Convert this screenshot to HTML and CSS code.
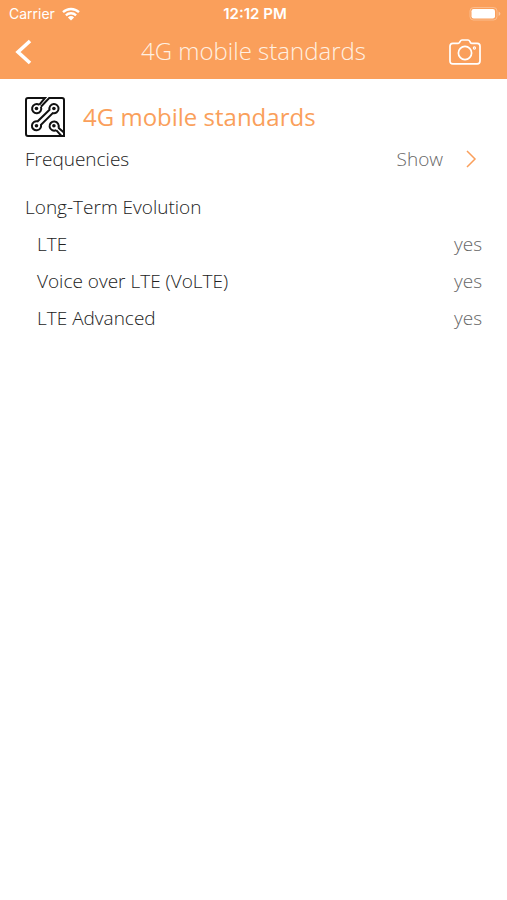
FILE: index.html
```html
<!DOCTYPE html>
<html lang="en">
<head>
<meta charset="utf-8">
<meta name="viewport" content="width=device-width, initial-scale=1">
<title>4G mobile standards</title>
<link rel="stylesheet" href="styles.css">
</head>
<body>
<header class="header">
  <div class="status">
    <div class="carrier">
      <span>Carrier</span>
      <svg class="wifi" viewBox="0 0 18 14" aria-hidden="true">
        <path d="M1 5.2a11.6 11.6 0 0 1 16 0M3.9 8.3a7.4 7.4 0 0 1 10.2 0" fill="none" stroke="currentColor" stroke-width="2.3"/>
        <path d="M9 13.6 5.9 10.5a4.5 4.5 0 0 1 6.2 0z" fill="currentColor"/>
      </svg>
    </div>
    <time class="time">12:12 PM</time>
    <svg class="battery" viewBox="0 0 32 16" aria-hidden="true">
      <rect x="1" y="1.5" width="27" height="12.5" rx="3.5" fill="none" stroke="currentColor" stroke-opacity=".3"/>
      <rect x="2.5" y="3" width="23.5" height="9.5" rx="2.2" fill="currentColor"/>
      <path d="M29.6 5.4v4.6q1.8-.8 1.8-2.3t-1.8-2.3z" fill="currentColor" fill-opacity=".4"/>
    </svg>
  </div>
  <nav class="nav">
    <button class="icon-button" type="button" aria-label="Back">
      <svg class="back" viewBox="0 0 18 28" aria-hidden="true">
        <path d="M15 3 3 14l12 11" fill="none" stroke="currentColor" stroke-width="3.6"/>
      </svg>
    </button>
    <div class="nav-title">4G mobile standards</div>
    <button class="icon-button camera-button" type="button" aria-label="Camera">
      <svg class="camera" viewBox="0 0 32 26" fill="none" stroke="currentColor" stroke-width="1.7" aria-hidden="true">
        <path d="M3.8 4.4h5.4q.8 0 1.2-.7l.9-1.5Q11.9 1 13 1h6q1.1 0 1.7 1.2l.9 1.5q.4.7 1.2.7h5.4Q31 4.4 31 7.2v14.9q0 2.8-2.8 2.8H3.8Q1 24.9 1 22.1V7.2q0-2.8 2.8-2.8z"/>
        <circle cx="16" cy="14" r="6.6"/>
        <circle cx="25.4" cy="9" r="1.1" stroke-width="1.1"/>
      </svg>
    </button>
  </nav>
</header>
<main class="content">
  <div class="title-row">
    <svg class="circuit" viewBox="0 0 40 40" fill="none" stroke="currentColor" stroke-width="2" aria-hidden="true">
      <path d="M14.2 7.8 20 1H3Q1 1 1 3v34q0 2 2 2h33.5L31.2 33.2"/>
      <path d="M15.9 9.8 24.2 1H37q2 0 2 2v32.5L33.4 30.8"/>
      <path d="M14.2 7.8A4.6 4.6 0 1 0 15.9 9.8M24.5 12.8 12.7 24.3A4.6 4.600 0 1 0 16 27.700L27.800 16.100A4.600 4.600 0 1 0 24.500 12.800zM33.400 30.800A4.600 4.600 0 1 0 31.200 33.200"/>
      <path d="M36.500 39H39V35.500"/>
      <g fill="currentColor" stroke="none">
        <circle cx="11.500" cy="11.500" r="1.800"/>
        <circle cx="28.900" cy="11.500" r="1.800"/>
        <circle cx="11.500" cy="28.800" r="1.800"/>
        <circle cx="28.900" cy="28.800" r="1.800"/>
      </g>
    </svg>
    <h1 class="title">4G mobile standards</h1>
  </div>
  <a class="row link-row" href="#frequencies">
    <span>Frequencies</span>
    <span class="value show">Show
      <svg class="chevron" viewBox="0 0 12 20" aria-hidden="true">
        <path d="m2 2 8 8-8 8" fill="none" stroke="currentColor" stroke-width="1.5"/>
      </svg>
    </span>
  </a>
  <h2 class="row section">Long-Term Evolution</h2>
  <dl class="list">
    <div class="row"><dt>LTE</dt><dd class="value">yes</dd></div>
    <div class="row"><dt>Voice over LTE (VoLTE)</dt><dd class="value">yes</dd></div>
    <div class="row"><dt>LTE Advanced</dt><dd class="value">yes</dd></div>
  </dl>
</main>
</body>
</html>
```
FILE: styles.css
```css
* {
  box-sizing: border-box;
}

body {
  margin: 0;
  background: #fff;
  color: #222;
  font-family: "Open Sans", sans-serif;
  font-size: 19px;
  font-weight: 300;
}

svg {
  display: block;
  flex: none;
}

.header {
  background: #fa9f5b;
  color: #fff;
}

.status {
  display: grid;
  grid-template-columns: 1fr auto 1fr;
  align-items: center;
  height: 27px;
  padding: 0 6px 0 9px;
  font-family: Inter, sans-serif;
  font-size: 14px;
  font-weight: 400;
}

.carrier {
  display: flex;
  align-items: center;
  gap: 7px;
}

.wifi {
  width: 18px;
  height: 14px;
}

.time {
  font-size: 15px;
  font-weight: 600;
}

.battery {
  width: 32px;
  height: 16px;
  justify-self: end;
}

.nav {
  display: grid;
  grid-template-columns: 48px 1fr 48px;
  align-items: center;
  height: 52px;
  padding: 0 26px 2px 15px;
}

.icon-button {
  padding: 0;
  border: 0;
  background: none;
  color: inherit;
  justify-self: start;
}

.back {
  width: 18px;
  height: 28px;
}

.camera-button {
  justify-self: end;
}

.camera {
  width: 32px;
  height: 26px;
}

.nav-title {
  padding: 0 0 2px 11px;
  color: #fff0e2;
  font-size: 24px;
  line-height: 36px;
  text-align: center;
}

.content {
  padding: 16px 25px;
}

.title-row {
  display: flex;
  align-items: center;
  gap: 18px;
  height: 43px;
}

.circuit {
  width: 40px;
  height: 40px;
  color: #111;
}

.title {
  margin: 0;
  color: #fa9f5b;
  font-size: 24px;
  font-weight: 400;
  line-height: 36px;
}

.row {
  display: flex;
  align-items: center;
  justify-content: space-between;
  height: 37px;
}

.link-row {
  height: 42px;
  color: inherit;
  text-decoration: none;
}

.value {
  margin: 0;
  color: #666;
}

.show {
  display: flex;
  align-items: center;
  gap: 22px;
  padding-right: 5px;
}

.chevron {
  width: 12px;
  height: 20px;
  color: #fa9f5b;
}

.section {
  margin: 8px 0 0;
  font-size: 19px;
  font-weight: 300;
}

.list {
  margin: 0;
  padding-left: 12px;
}
```
